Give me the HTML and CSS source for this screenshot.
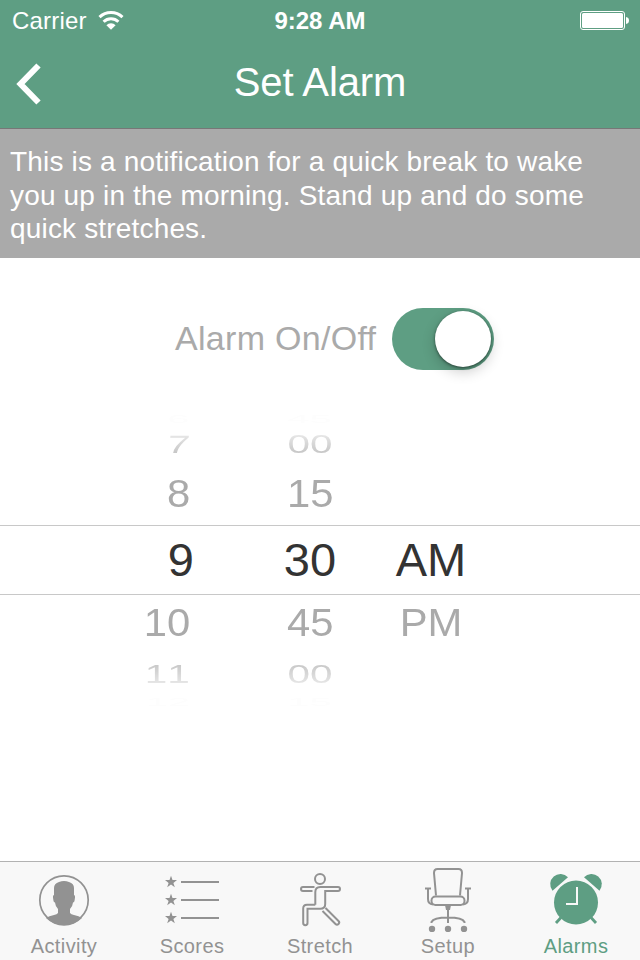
FILE: index.html
```html
<!DOCTYPE html>
<html lang="en">

<head>
    <meta charset="UTF-8">
    <meta name="viewport" content="width=device-width, initial-scale=1.0">
    <title>Set Alarm</title>
    <link rel="stylesheet" href="styles.css">
</head>

<body>
    <header class="header">
        <div class="status-bar">
            <div class="carrier">
                <span>Carrier</span>
                <svg width="26" height="20" viewBox="0 0 26 20" fill="none" stroke="#fff">
                    <path d="M1.500 6.200a16.500 16.500 0 0 1 23 0" stroke-width="3" />
                    <path d="M5.600 10.800a10.600 10.600 0 0 1 14.800 0" stroke-width="3" />
                    <path d="M13 18.800L8.400 14.200a6.400 6.400 0 0 1 9.200 0z" fill="#fff" stroke="none" />
                </svg>
            </div>
            <span class="time">9:28 AM</span>
            <svg class="battery" width="50" height="20" viewBox="0 0 50 20">
                <rect x=".5" y=".5" width="44" height="18" rx="2.500" fill="none" stroke="#fff" />
                <rect x="2" y="2" width="41" height="15" rx="1.500" fill="#fff" />
                <path d="M46 6c2 .3 3 1.500 3 3.500s-1 3.200-3 3.500z" fill="#fff" />
            </svg>
        </div>
        <div class="nav-bar">
            <svg class="back" width="28" height="42" viewBox="0 0 28 42" fill="none" stroke="#fff" stroke-width="6">
                <path d="M24.500 2.500L6.500 21l18 18.500" />
            </svg>
            <h1>Set Alarm</h1>
        </div>
    </header>

    <p class="message">This is a notification for a quick break to wake<br>
        you up in the morning. Stand up and do some<br>
        quick stretches.</p>

    <main class="content">
        <div class="alarm-toggle">
            <span class="label">Alarm On/Off</span>
            <div class="switch">
                <div class="knob"></div>
            </div>
        </div>

        <div class="picker">
            <div class="row edge"><span class="hour">6</span><span class="minute">45</span></div>
            <div class="row far top"><span class="hour seven">7</span><span class="minute">00</span></div>
            <div class="row near"><span class="hour">8</span><span class="minute">15</span></div>
            <div class="row selected"><span class="hour">9</span><span class="minute">30</span><span class="period">AM</span></div>
            <div class="row near"><span class="hour">10</span><span class="minute">45</span><span class="period">PM</span></div>
            <div class="row far bottom"><span class="hour">11</span><span class="minute">00</span></div>
            <div class="row edge"><span class="hour">12</span><span class="minute">15</span></div>
        </div>
    </main>

    <nav class="tab-bar">
        <div class="tab">
            <svg width="60" height="66" viewBox="0 0 60 66">
                <circle cx="30" cy="34" r="24.200" fill="none" stroke="#929292" stroke-width="1.700" />
                <path d="M20 22Q20 17.500 25 16 30 14 35 16 40 17.500 40 22V29Q41.500 29 40.800 33 40.500 36.500 39 36.500 38.500 41 36 43V47Q37 48.500 40 49 45 50 48 52A25 25 0 0 1 12 52Q15 50 20 49 23 48.500 24 47V43Q21.500 41 21 36.500 19.500 36.500 19.200 33 18.500 29 20 29Z" fill="#929292" />
            </svg>
            <span>Activity</span>
        </div>
        <div class="tab">
            <svg width="60" height="66" viewBox="0 0 60 66" fill="#929292">
                <defs>
                    <path id="star" d="M0-6.300L1.500-2H6L2.400.9 3.800 5.300 0 2.600-3.800 5.300-2.400.9-6-2h4.500z" />
                </defs>
                <use href="#star" x="9" y="16" />
                <use href="#star" x="9" y="34" />
                <use href="#star" x="9" y="52" />
                <path d="M19 15h38v2H19zM19 33h38v2H19zM19 51h38v2H19z" />
            </svg>
            <span>Scores</span>
        </div>
        <div class="tab">
            <svg width="60" height="66" viewBox="0 0 60 66" fill="none" stroke="#929292" stroke-width="2">
                <circle cx="30" cy="13" r="5" />
                <path d="M24.500 21H13a2 2 0 0 0 0 4h9.500M25.300 38.800V26q0-5 5-5H48a2 2 0 0 1 0 4H35.200V38q0 4.800-5 4.800H17.500V57a2 2 0 0 1-4.300 0V42.500q0-3.700 3.800-3.700h8.300" />
                <path d="M32.500 45L45.500 58q1.500 1.500 3 0t0-3L35.500 42" />
            </svg>
            <span>Stretch</span>
        </div>
        <div class="tab">
            <svg width="60" height="66" viewBox="1 0 60 66" fill="none" stroke="#929292" stroke-width="2">
                <path d="M19 29.500L17 7q0-4 3.500-4h21Q45 3 45 7l-2 22.500" />
                <rect x="14.500" y="30.500" width="33" height="8.500" rx="4" />
                <path d="M8 22.500h6M11 22.500V33q0 5 5 5.500M54 22.500h-6M51 22.500V33q0 5-5 5.500" />
                <path d="M28 39h6l-1 5h-4z" fill="#929292" stroke="none" />
                <path d="M31 42v15M14.500 57v-1q2-4.500 16.500-4.500T47.500 56v1" />
                <g fill="#929292" stroke="none">
                    <circle cx="15" cy="63" r="3.200" />
                    <circle cx="31" cy="63" r="3.200" />
                    <circle cx="47" cy="63" r="3.200" />
                </g>
            </svg>
            <span>Setup</span>
        </div>
        <div class="tab active">
            <svg width="60" height="66" viewBox="0 0 60 66" fill="#5e9e83">
                <circle cx="30" cy="36.500" r="22" />
                <path d="M6.500 24.700A10.250 10.250 0 0 1 22 11.300z" />
                <path d="M53.500 24.700A10.250 10.250 0 0 0 38 11.300z" />
                <path d="M15 51.500l-5 5.500M45 51.500l5 5.500" fill="none" stroke="#5e9e83" stroke-width="2.800" />
                <path d="M31 21v17H20" fill="none" stroke="#f8f8f8" stroke-width="2" />
            </svg>
            <span>Alarms</span>
        </div>
    </nav>
</body>

</html>
```
FILE: styles.css
```css
body {
    margin: 0;
    height: 960px;
    display: flex;
    flex-direction: column;
    overflow: hidden;
    background: #fff;
    font-family: "Liberation Sans", Arial, sans-serif;
}

.header {
    box-sizing: border-box;
    height: 129px;
    border-bottom: 1px solid #777;
    background: #5e9e83;
    color: #fff;
}

.status-bar {
    display: grid;
    grid-template-columns: 1fr auto 1fr;
    align-items: center;
    height: 42px;
    padding: 0 10px 0 12px;
    font-size: 24px;
}

.carrier {
    display: flex;
    align-items: center;
    gap: 11px;
    letter-spacing: 0.2px;
}

.carrier svg {
    margin-bottom: 1px;
}

.time {
    margin-right: 2px;
    font-weight: bold;
}

.battery {
    justify-self: end;
}

.nav-bar {
    display: grid;
    grid-template-columns: 48px 1fr 48px;
    align-items: center;
    height: 86px;
}

.back {
    margin: 0 0 2px 14px;
}

h1 {
    margin: 0;
    padding-bottom: 5px;
    text-align: center;
    font-size: 40px;
    font-weight: normal;
    letter-spacing: -0.1px;
}

.message {
    box-sizing: border-box;
    height: 129px;
    margin: 0;
    padding: 16px 10px;
    background: #aaa;
    color: #fff;
    font-size: 28px;
    line-height: 33.5px;
    letter-spacing: 0.17px;
    white-space: nowrap;
}

.content {
    flex: 1;
}

.alarm-toggle {
    display: flex;
    align-items: center;
    height: 62px;
    margin: 50px 0 0 175px;
}

.label {
    width: 217px;
    padding-bottom: 2px;
    color: #aaa;
    font-size: 34px;
    letter-spacing: 0.3px;
}

.switch {
    box-sizing: border-box;
    display: flex;
    justify-content: flex-end;
    width: 102px;
    height: 62px;
    padding: 3px;
    border-radius: 31px;
    background: #5e9e83;
}

.knob {
    width: 56px;
    height: 56px;
    border-radius: 50%;
    background: #fff;
    box-shadow: 0 5px 14px rgba(0, 0, 0, 0.2), 0 1px 3px rgba(0, 0, 0, 0.5);
}

.picker {
    display: grid;
    grid-template-rows: 14px 34px 65px 69px 55px 47px 12px;
    margin-top: 43px;
}

.row {
    display: grid;
    grid-template-columns: 195px 230px 1fr;
    align-items: center;
    color: #aaa;
    font-kerning: none;
}

.hour {
    justify-self: end;
    margin-right: 5px;
    transform-origin: 100% 50%;
}

.minute {
    justify-self: center;
}

.period {
    width: 72px;
    margin-left: -30px;
    text-align: center;
}

.selected {
    box-sizing: border-box;
    height: 70px;
    margin-top: -1px;
    border-top: 1px solid #c8c8c8;
    border-bottom: 1px solid #c8c8c8;
    color: #333;
    font-size: 47px;
    line-height: 54px;
}

.selected .hour {
    margin-right: 1px;
}

/* rows get flatter the further they roll away from the centre */
.near {
    font-size: 38px;
    line-height: 42px;
}

.near span {
    transform: scaleX(1.1);
}

.far {
    font-size: 25px;
    line-height: 28px;
}

.far span {
    transform: scaleX(1.62);
}

.far .seven {
    transform: scaleX(1.62) skewX(-5deg);
}

.far.top {
    -webkit-mask-image: linear-gradient(rgba(0, 0, 0, 0.3) 25%, rgba(0, 0, 0, 0.65) 75%);
    mask-image: linear-gradient(rgba(0, 0, 0, 0.3) 25%, rgba(0, 0, 0, 0.65) 75%);
}

.far.bottom {
    -webkit-mask-image: linear-gradient(rgba(0, 0, 0, 0.65) 30%, rgba(0, 0, 0, 0.3) 70%);
    mask-image: linear-gradient(rgba(0, 0, 0, 0.65) 30%, rgba(0, 0, 0, 0.3) 70%);
}

.edge {
    color: #fdfdfd;
    font-size: 10px;
    line-height: 12px;
}

.edge span {
    transform: scaleX(4);
}

.tab-bar {
    box-sizing: border-box;
    display: grid;
    grid-template-columns: repeat(5, 1fr);
    height: 99px;
    border-top: 1px solid #b2b2b2;
    background: #f8f8f8;
}

.tab {
    display: flex;
    flex-direction: column;
    align-items: center;
    padding-top: 4px;
    color: #929292;
    font-size: 20px;
    line-height: 28px;
    letter-spacing: 0.4px;
}

.tab.active {
    color: #5e9e83;
}
```
